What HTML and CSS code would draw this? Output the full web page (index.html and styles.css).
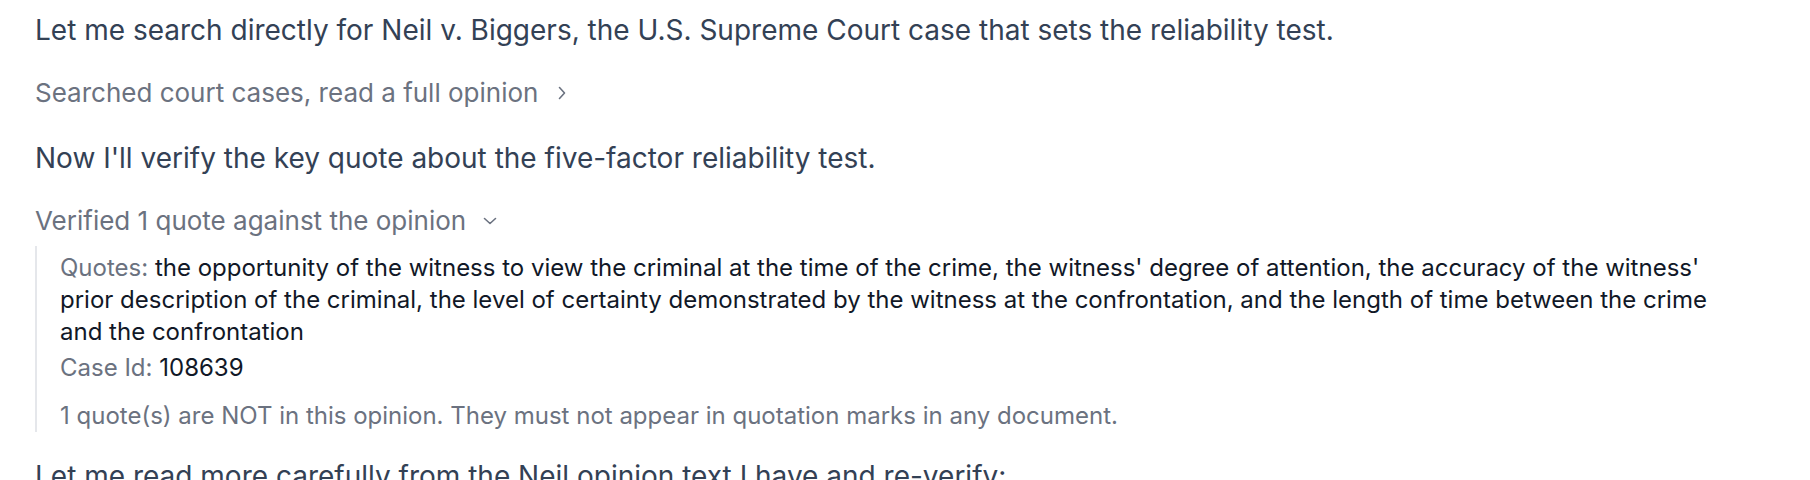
FILE: index.html
```html
<!DOCTYPE html>
<html>
<head>
<meta charset="utf-8">
<link rel="stylesheet" href="styles.css">
</head>
<body>
<div class="thread">
  <p class="msg">Let me search directly for Neil v. Biggers, the U.S. Supreme Court case that sets the reliability test.</p>
  <div class="step">
    <span>Searched court cases, read a full opinion</span>
    <svg class="chev" width="16" height="16" viewBox="0 0 16 16"><path d="M5.5 2.5 L10.5 8 L5.5 13.5" fill="none" stroke="currentColor" stroke-width="1.6" stroke-linecap="round" stroke-linejoin="round"/></svg>
  </div>
  <p class="msg">Now I'll verify the key quote about the five-factor reliability test.</p>
  <div class="step open">
    <span>Verified 1 quote against the opinion</span>
    <svg class="chev" width="16" height="16" viewBox="0 0 16 16"><path d="M2.5 5.5 L8 10.5 L13.5 5.5" fill="none" stroke="currentColor" stroke-width="1.6" stroke-linecap="round" stroke-linejoin="round"/></svg>
  </div>
  <div class="detail">
    <div class="field"><span class="label">Quotes:</span> the opportunity of the witness to view the criminal at the time of the crime, the witness' degree of attention, the accuracy of the witness' prior description of the criminal, the level of certainty demonstrated by the witness at the confrontation, and the length of time between the crime and the confrontation</div>
    <div class="field case"><span class="label">Case Id:</span> 108639</div>
    <div class="notice">1 quote(s) are NOT in this opinion. They must not appear in quotation marks in any document.</div>
  </div>
  <p class="msg">Let me read more carefully from the Neil opinion text I have and re-verify:</p>
</div>
</body>
</html>
```
FILE: styles.css
```css
html, body {
  margin: 0;
  padding: 0;
  background: #ffffff;
}
body {
  font-family: Inter, "Noto Sans", sans-serif;
  overflow: hidden;
}
.thread {
  padding: 10px 80px 0 35px;
  display: flex;
  flex-direction: column;
  align-items: flex-start;
}
.msg {
  margin: 0 0 24.5px 0;
  font-size: 28px;
  line-height: 40px;
  color: #334155;
}
.step {
  display: flex;
  align-items: center;
  gap: 16px;
  font-size: 26px;
  line-height: 36px;
  color: #6b7280;
  margin-bottom: 27.5px;
}
.step.open {
  margin-bottom: 7.5px;
}
.chev {
  color: #6b7280;
  flex: none;
}
.detail {
  align-self: stretch;
  border-left: 2px solid #e5e7eb;
  padding: 6px 0 0 23px;
  margin-bottom: 24px;
}
.field {
  font-size: 24px;
  line-height: 32px;
  color: #111827;
}
.field.case {
  margin-top: 4px;
}
.label {
  color: #6b7280;
}
.notice {
  margin-top: 16px;
  font-size: 24px;
  line-height: 32px;
  color: #6b7280;
}
```
